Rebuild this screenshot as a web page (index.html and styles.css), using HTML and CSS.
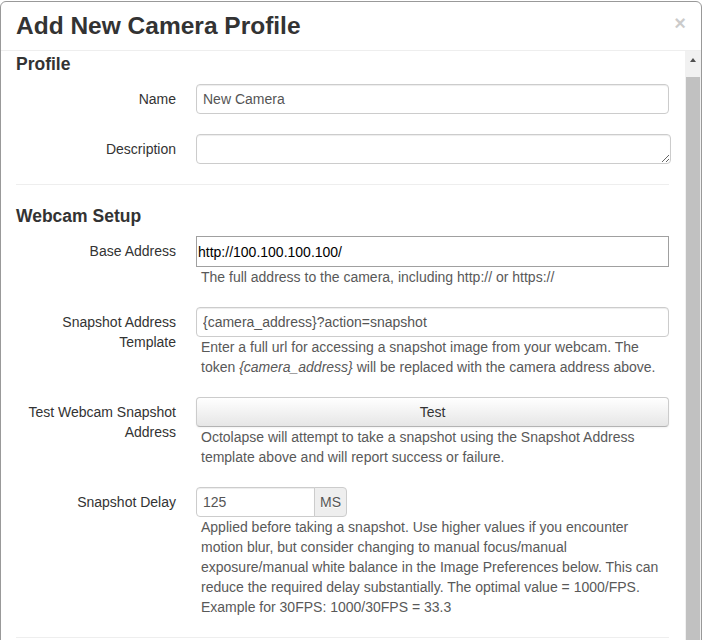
FILE: index.html
```html
<!DOCTYPE html>
<html lang="en">
<head>
<meta charset="utf-8">
<title>Add New Camera Profile</title>
<link rel="stylesheet" href="styles.css">
</head>
<body>
<div class="modal">
  <div class="modal-header">
    <h3 class="modal-title">Add New Camera Profile</h3>
    <button class="close" type="button">&times;</button>
  </div>
  <div class="modal-main">
    <div class="modal-body">
      <h4 class="section-title first">Profile</h4>
      <div class="control-group">
        <label class="control-label">Name</label>
        <div class="controls"><input class="input" type="text" value="New Camera"></div>
      </div>
      <div class="control-group">
        <label class="control-label">Description</label>
        <div class="controls"><textarea class="input textarea"></textarea></div>
      </div>
      <hr class="divider">
      <h4 class="section-title">Webcam Setup</h4>
      <div class="control-group">
        <label class="control-label">Base Address</label>
        <div class="controls">
          <input class="input-plain" type="url" value="http://100.100.100.100/">
          <span class="help">The full address to the camera, including http:// or https://</span>
        </div>
      </div>
      <div class="control-group">
        <label class="control-label">Snapshot Address Template</label>
        <div class="controls">
          <input class="input" type="text" value="{camera_address}?action=snapshot">
          <span class="help">Enter a full url for accessing a snapshot image from your webcam. The token <em>{camera_address}</em> will be replaced with the camera address above.</span>
        </div>
      </div>
      <div class="control-group">
        <label class="control-label">Test Webcam Snapshot Address</label>
        <div class="controls">
          <button class="btn" type="button">Test</button>
          <span class="help">Octolapse will attempt to take a snapshot using the Snapshot Address template above and will report success or failure.</span>
        </div>
      </div>
      <div class="control-group">
        <label class="control-label">Snapshot Delay</label>
        <div class="controls">
          <div class="input-append">
            <input class="input input-short" type="text" value="125">
            <span class="add-on">MS</span>
          </div>
          <span class="help">Applied before taking a snapshot. Use higher values if you encounter motion blur, but consider changing to manual focus/manual exposure/manual white balance in the Image Preferences below. This can reduce the required delay substantially. The optimal value = 1000/FPS. Example for 30FPS: 1000/30FPS = 33.3</span>
        </div>
      </div>
      <hr class="divider">
    </div>
    <div class="scrollbar">
      <div class="scroll-arrow"></div>
      <div class="scroll-thumb"></div>
    </div>
  </div>
</div>
</body>
</html>
```

FILE: styles.css
```css
* {
  box-sizing: border-box;
}

html,
body {
  margin: 0;
  padding: 0;
  background: #fff;
  overflow: hidden;
}

body {
  font-family: "Liberation Sans", Arial, sans-serif;
  font-size: 14px;
  line-height: 20px;
  color: #333;
}

.modal {
  margin-top: 1px;
  width: 702px;
  height: 680px;
  border: 1px solid #999;
  border-radius: 6px;
  background: #fff;
  display: flex;
  flex-direction: column;
  overflow: hidden;
}

.modal-header {
  display: flex;
  justify-content: space-between;
  align-items: flex-start;
  padding: 9px 15px;
  border-bottom: 1px solid #eee;
}

.modal-title {
  margin: 0;
  font-size: 24.5px;
  line-height: 30px;
  font-weight: bold;
  color: #333;
}

.close {
  margin-top: 2px;
  padding: 0;
  border: 0;
  background: none;
  font-family: inherit;
  font-size: 20px;
  font-weight: bold;
  line-height: 20px;
  color: #000;
  opacity: 0.2;
}

.modal-main {
  flex: 1;
  display: flex;
  min-height: 0;
}

.modal-body {
  flex: 1;
  padding: 3px 16px 0 15px;
  overflow: hidden;
}

.scrollbar {
  width: 16px;
  background: #f1f1f1;
  display: flex;
  flex-direction: column;
  align-items: center;
}

.scroll-arrow {
  width: 0;
  height: 0;
  margin-top: 7px;
  border-left: 3.5px solid transparent;
  border-right: 3.5px solid transparent;
  border-bottom: 4px solid #505050;
}

.scroll-thumb {
  margin-top: 15px;
  width: 14px;
  flex: 1;
  background: #c1c1c1;
}

.section-title {
  margin: 0 0 10px;
  font-size: 17.5px;
  line-height: 20px;
  font-weight: bold;
  color: #333;
}

.control-group {
  display: grid;
  grid-template-columns: 160px 1fr;
  column-gap: 20px;
  margin-bottom: 20px;
}

.control-label {
  padding-top: 5px;
  text-align: right;
  color: #333;
}

.controls {
  min-width: 0;
}

.input {
  display: block;
  width: 100%;
  height: 30px;
  margin: 0;
  padding: 4px 6px;
  font: inherit;
  color: #555;
  background: #fff;
  border: 1px solid #ccc;
  border-radius: 4px;
  box-shadow: inset 0 1px 1px rgba(0, 0, 0, 0.075);
}

.textarea {
  width: calc(100% + 2px);
  resize: vertical;
}

.input-plain {
  display: block;
  width: 100%;
  height: 31px;
  margin: 0;
  padding: 0 1px;
  font: inherit;
  color: #000;
  background: #fff;
  border: 1px solid #a0a0a0;
  border-radius: 0;
}

.help {
  display: block;
  padding-left: 5px;
  color: #595959;
}

.btn {
  display: block;
  width: 100%;
  height: 30px;
  margin: 0;
  padding: 4px 12px;
  font: inherit;
  color: #333;
  text-align: center;
  background: linear-gradient(#fff, #e6e6e6);
  border: 1px solid #ccc;
  border-bottom-color: #b3b3b3;
  border-radius: 4px;
  box-shadow: inset 0 1px 0 rgba(255, 255, 255, 0.2), 0 1px 2px rgba(0, 0, 0, 0.05);
}

.input-append {
  display: flex;
}

.input-short {
  width: 119px;
  border-radius: 4px 0 0 4px;
}

.add-on {
  height: 30px;
  margin-left: -1px;
  padding: 4px 5px;
  color: #555;
  background: #eee;
  border: 1px solid #ccc;
  border-radius: 0 4px 4px 0;
  text-shadow: 0 1px 0 #fff;
}

.divider {
  margin: 0 0 20px;
  border: 0;
  border-top: 1px solid #eee;
  border-bottom: 1px solid #fff;
}
```
